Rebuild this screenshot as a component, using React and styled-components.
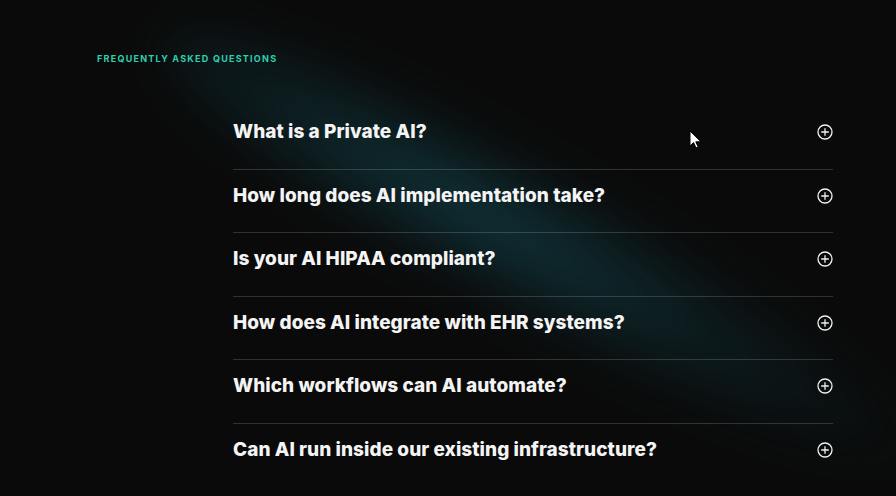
import React from 'react';
import styled, { createGlobalStyle } from 'styled-components';

const GlobalStyle = createGlobalStyle`
  html, body {
    margin: 0;
    padding: 0;
    background: #0a0a0a;
  }
  body {
    font-family: Inter, "Open Sans", sans-serif;
  }
`;

const Section = styled.section`
  position: relative;
  width: 896px;
  height: 496px;
  overflow: hidden;
  background: #0a0a0a;
  padding: 53px 63px 0 97px;
  box-sizing: border-box;
`;

const Glow = styled.div`
  position: absolute;
  left: 110px;
  top: 165px;
  width: 860px;
  height: 165px;
  border-radius: 50%;
  background: radial-gradient(ellipse at 42% 50%, rgba(18, 64, 72, 0.75) 0%, rgba(14, 46, 52, 0.42) 40%, rgba(10, 10, 10, 0) 72%);
  transform: rotate(29deg);
  filter: blur(20px);
  pointer-events: none;
`;

const Content = styled.div`
  position: relative;
  display: flex;
  flex-direction: column;
`;

const Eyebrow = styled.h2`
  margin: 0;
  font-family: Inter, sans-serif;
  font-size: 9px;
  font-weight: 700;
  letter-spacing: 1.25px;
  line-height: 12px;
  text-transform: uppercase;
  color: #2fcfae;
`;

const List = styled.div`
  margin: 41px 0 0 136px;
  width: 600px;
  display: flex;
  flex-direction: column;
`;

const Item = styled.div`
  border-top: ${({ $first }) => ($first ? 'none' : '1px solid rgba(255, 255, 255, 0.16)')};
  padding: 15px 0 25.6px;
  display: flex;
  align-items: center;
  justify-content: space-between;
`;

const Question = styled.span`
  font-family: Inter, sans-serif;
  font-size: 19px;
  font-weight: 800;
  line-height: 22px;
  color: #f4f4f4;
  letter-spacing: 0.05px;
`;

const Toggle = styled.button`
  width: 16px;
  height: 16px;
  padding: 0;
  border: none;
  background: none;
  display: flex;
  color: #f0f0f0;
  cursor: pointer;
`;

const Cursor = styled.svg`
  position: absolute;
  left: 689px;
  top: 130px;
`;

const PlusCircle = () => (
  <svg width="16" height="16" viewBox="0 0 16 16" fill="none" stroke="currentColor" strokeWidth="1.3">
    <circle cx="8" cy="8" r="7" />
    <path d="M8 4.2v7.6M4.2 8h7.6" />
  </svg>
);

const questions = [
  'What is a Private AI?',
  'How long does AI implementation take?',
  'Is your AI HIPAA compliant?',
  'How does AI integrate with EHR systems?',
  'Which workflows can AI automate?',
  'Can AI run inside our existing infrastructure?',
];

export default function App() {
  return (
    <>
      <GlobalStyle />
      <Section>
        <Glow />
        <Content>
          <Eyebrow>Frequently Asked Questions</Eyebrow>
          <List>
            {questions.map((q, i) => (
              <Item key={q} $first={i === 0}>
                <Question>{q}</Question>
                <Toggle aria-label="Expand">
                  <PlusCircle />
                </Toggle>
              </Item>
            ))}
          </List>
        </Content>
        <Cursor width="12" height="19" viewBox="0 0 12 19">
          <path d="M1 1v15l3.6-3.4 2.4 5.4 2.2-1-2.4-5.2H12z" fill="#fff" stroke="#000" strokeWidth="1" />
        </Cursor>
      </Section>
    </>
  );
}
